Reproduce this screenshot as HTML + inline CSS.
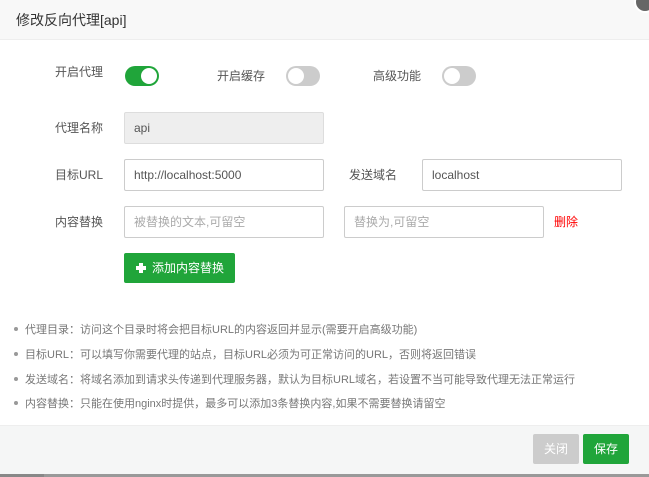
<!DOCTYPE html>
<html><head><meta charset="utf-8"><style>
*{margin:0;padding:0;box-sizing:border-box}
body{width:649px;height:477px;overflow:hidden;background:#fff;font-family:"Liberation Sans","Noto Sans CJK SC",sans-serif;font-size:12px;color:#555;position:relative}
.a{position:absolute}
.hd{left:0;top:0;width:649px;height:40px;background:#f8f8f8;border-bottom:1px solid #eee}
.hd span{position:absolute;left:16px;top:10px;font-size:14px;color:#333}
.lbl{font-size:12px;color:#555;line-height:14px}
.tg{width:34px;height:20px;border-radius:10px;background:#ccc}
.tg i{position:absolute;top:2px;width:16px;height:16px;border-radius:50%;background:#fff}
.in{height:32px;border:1px solid #ccc;border-radius:2px;padding-left:9px;line-height:30px;font-size:12px;color:#555;width:200px}
.ph{color:#aaa}
.note{left:14px;font-size:11px;color:#777;line-height:14px}
.note b{display:inline-block;width:4px;height:4px;border-radius:50%;background:#999;margin-right:7px;vertical-align:middle;position:relative;top:-1px}
</style></head><body>
<div class="a hd"><span>修改反向代理[api]</span></div>
<div class="a" style="left:634px;top:-9px;width:22px;height:22px;border-radius:50%;background:#666;border:2px solid #fff"></div>

<div class="a lbl" style="left:55px;top:65px">开启代理</div>
<div class="a tg" style="left:125px;top:66px;background:#20a53a"><i style="left:16px"></i></div>
<div class="a lbl" style="left:217px;top:69px">开启缓存</div>
<div class="a tg" style="left:286px;top:66px"><i style="left:2px"></i></div>
<div class="a lbl" style="left:373px;top:69px">高级功能</div>
<div class="a tg" style="left:442px;top:66px"><i style="left:2px"></i></div>

<div class="a lbl" style="left:55px;top:121px">代理名称</div>
<div class="a in" style="left:124px;top:112px;background:#eee;border-color:#ddd">api</div>

<div class="a lbl" style="left:55px;top:168px">目标URL</div>
<div class="a in" style="left:124px;top:159px">http://localhost:5000</div>
<div class="a lbl" style="left:349px;top:168px">发送域名</div>
<div class="a in" style="left:422px;top:159px">localhost</div>

<div class="a lbl" style="left:55px;top:215px">内容替换</div>
<div class="a in ph" style="left:124px;top:206px">被替换的文本,可留空</div>
<div class="a in ph" style="left:344px;top:206px">替换为,可留空</div>
<div class="a lbl" style="left:554px;top:215px;color:#f00">删除</div>

<div class="a" style="left:124px;top:253px;width:111px;height:30px;background:#20a53a;border-radius:2px;color:#fff;font-size:12px;line-height:30px;padding-left:12px"><span style="display:inline-block;position:relative;width:10px;height:10px;margin-right:6px;top:1px"><i style="position:absolute;left:3px;top:0;width:4px;height:10px;background:#fff"></i><i style="position:absolute;left:0;top:3px;width:10px;height:4px;background:#fff"></i></span>添加内容替换</div>

<div class="a note" style="top:323px"><b></b>代理目录：访问这个目录时将会把目标URL的内容返回并显示(需要开启高级功能)</div>
<div class="a note" style="top:348px"><b></b>目标URL：可以填写你需要代理的站点，目标URL必须为可正常访问的URL，否则将返回错误</div>
<div class="a note" style="top:373px"><b></b>发送域名：将域名添加到请求头传递到代理服务器，默认为目标URL域名，若设置不当可能导致代理无法正常运行</div>
<div class="a note" style="top:397px"><b></b>内容替换：只能在使用nginx时提供，最多可以添加3条替换内容,如果不需要替换请留空</div>

<div class="a" style="left:0;top:425px;width:649px;height:49px;background:#f5f6f6;border-top:1px solid #eee"></div>
<div class="a" style="left:533px;top:434px;width:46px;height:30px;background:#ccc;border-radius:2px;color:#fff;text-align:center;line-height:30px">关闭</div>
<div class="a" style="left:583px;top:434px;width:46px;height:30px;background:#20a53a;border-radius:2px;color:#fff;text-align:center;line-height:30px">保存</div>
<div class="a" style="left:0;top:474px;width:649px;height:3px;background:#999"></div>
<div class="a" style="left:0;top:474px;width:44px;height:3px;background:#888"></div>
</body></html>
